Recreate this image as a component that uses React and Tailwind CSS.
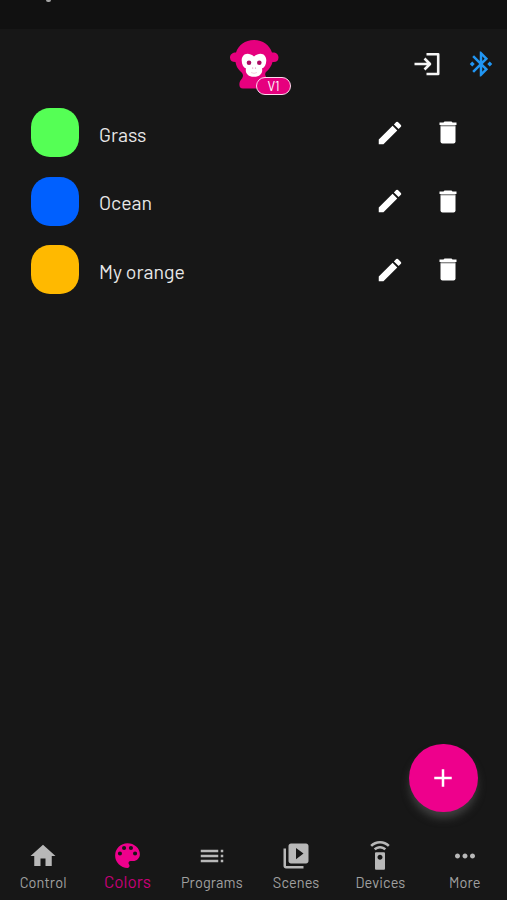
import React, { useState } from 'react';
import {
  MdAdd, MdBluetoothConnected, MdEdit, MdHome, MdMoreHoriz,
  MdSettingsRemote, MdToc, MdVideoLibrary
} from 'react-icons/md';

const PaletteIcon = ({ className }) => (
  <svg viewBox="0 0 24 24" className={className} fill="currentColor">
    <path d="M12 3a9 9 0 0 0 0 18c.83 0 1.500-.67 1.500-1.500 0-.39-.15-.74-.39-1.010-.23-.26-.38-.61-.38-.99 0-.83.67-1.500 1.500-1.500H16c2.760 0 5-2.240 5-5 0-4.420-4.030-8-9-8zM6.500 12a1.500 1.500 0 1 1 0-3 1.500 1.500 0 0 1 0 3zM9.500 8a1.500 1.500 0 1 1 0-3 1.500 1.500 0 0 1 0 3zM14.500 8a1.500 1.500 0 1 1 0-3 1.500 1.500 0 0 1 0 3zM17.500 12a1.500 1.500 0 1 1 0-3 1.500 1.500 0 0 1 0 3z" />
  </svg>
);

const TrashIcon = () => (
  <svg viewBox="0 0 18 23" className="w-[18px] h-[23px]">
    <path d="M5.500 0.500H12.500L13.500 1.500H17.500V4H0.500V1.500H4.500Z" fill="#fff" />
    <path d="M1.500 4H16.500V5.500H1.500Z" fill="#8a8a8a" />
    <path d="M1.500 5.300H16.500V20.500Q16.500 22.500 14.500 22.500H3.500Q1.500 22.500 1.500 20.500Z" fill="#fff" />
  </svg>
);

const COLORS = [
  { name: 'Grass', swatch: 'bg-[#55ff55]' },
  { name: 'Ocean', swatch: 'bg-[#0060ff]' },
  { name: 'My orange', swatch: 'bg-[#ffb900]' }
];

const TABS = [
  { name: 'Control', icon: MdHome },
  { name: 'Colors', icon: PaletteIcon },
  { name: 'Programs', icon: MdToc },
  { name: 'Scenes', icon: MdVideoLibrary },
  { name: 'Devices', icon: MdSettingsRemote },
  { name: 'More', icon: MdMoreHoriz }
];

const Logo = () => (
  <div className="relative w-[62px] h-[56px]">
    <svg viewBox="0 0 62 56" className="w-full h-full">
      <g fill="#e6007e">
        <path d="M24 0C33 0 39.500 5 42 12.500C45.500 12 48.500 14 48.500 17.500C48.500 21 46 22.500 42.500 22C41.500 26 39 29.500 36 32C34.500 34 35 36 38 39V48.500H13C10 48.500 9 46.500 9.500 43C10 40 13 38.500 13 35.500C13 33.500 11.500 32.500 10 31C7.500 28.500 6 25.500 5.500 22C2 22 0 20.500 0 17.500C0 14.500 2.500 12.500 6 12.500C8.500 5 15 0 24 0Z" />
      </g>
      <path d="M24 16.500C22 14.500 19.500 13.700 17.500 13.700C14 13.700 11.700 16.500 11.700 20.500C11.700 24.500 13.500 27.500 16 28.500C15 32.500 17.500 36.800 24 36.800C30.500 36.800 33 32.500 32 28.500C34.500 27.500 36.300 24.500 36.300 20.500C36.300 16.500 34 13.700 30.500 13.700C28.500 13.700 26 14.500 24 16.500Z" fill="#fff" />
      <circle cx="19" cy="22.700" r="2.300" fill="#ad0963" />
      <circle cx="29.300" cy="22.700" r="2.300" fill="#ad0963" />
      <circle cx="22.700" cy="28" r="0.600" fill="#d66a9e" />
      <circle cx="25.500" cy="28" r="0.600" fill="#d66a9e" />
      <path d="M21 32.500Q24 34.200 27 32.500" fill="none" stroke="#eebad3" strokeWidth="0.700" />
    </svg>
    <div className="absolute left-[26px] top-[36.500px] w-[35px] h-[18px] rounded-full border-[1.5px] border-[#ffd9ee] bg-[#e6007e] flex items-center justify-center pt-px text-[13px] leading-none text-white">
      V1
    </div>
  </div>
);

const LoginIcon = () => (
  <svg viewBox="0 0 26 24" className="w-[26px] h-6" fill="none" stroke="#f5f5f5" strokeWidth="2.600">
    <path d="M12.500 2.300H24.200V22H12.500M0.500 12H16M10.500 6.500L16 12L10.500 17.500" strokeLinejoin="round" />
  </svg>
);

const App = () => {
  const [activeTab, setActiveTab] = useState('Colors');

  return (
    <div className="relative w-full h-[900px] flex flex-col overflow-hidden bg-[#171717] font-['Barlow','Roboto',sans-serif] text-white">
      {/* Status bar */}
      <div className="h-[29px] shrink-0 bg-[#111111]">
        <div className="ml-[46px] w-[5px] h-[2px] rounded-b-full bg-[#a5a5a5]" />
      </div>

      {/* Header */}
      <header className="h-[69.5px] shrink-0 grid grid-cols-[1fr_62px_1fr] pl-[15px]">
        <div />
        <div className="pt-[11px]">
          <Logo />
        </div>
        <div className="h-[70px] flex items-center justify-end gap-[26.5px] pr-[11px]">
          <button type="button" aria-label="Log in"><LoginIcon /></button>
          <button type="button" aria-label="Bluetooth">
            <MdBluetoothConnected className="w-[30px] h-[30px] text-[#2196f3]" />
          </button>
        </div>
      </header>

      {/* Saved colors */}
      <main className="flex-1">
        {COLORS.map((color) => (
          <div key={color.name} className="h-[68.5px] flex items-center pl-[31px] pr-[50px]">
            <div className={`w-12 h-[49px] rounded-[19px] ${color.swatch}`} />
            <span className="ml-5 mt-[3px] flex-1 text-[19.5px] text-[#e8e8e8]">{color.name}</span>
            <button type="button" aria-label="Edit"><MdEdit className="w-[30px] h-[30px]" /></button>
            <button type="button" aria-label="Delete" className="ml-[34.5px]">
              <TrashIcon />
            </button>
          </div>
        ))}
      </main>

      {/* Add button */}
      <button
        type="button"
        aria-label="Add color"
        className="absolute left-[409px] top-[743.5px] w-[68.5px] h-[68.5px] rounded-full bg-[#ee008c] flex items-center justify-center shadow-[0_7px_9px_-1px_#404040]"
      >
        <MdAdd className="w-[30px] h-[30px]" />
      </button>

      {/* Bottom navigation */}
      <nav className="h-[66px] shrink-0 grid grid-cols-6 pl-px">
        {TABS.map(({ name, icon: Icon }) => (
          <button
            type="button"
            key={name}
            onClick={() => setActiveTab(name)}
            className={`flex flex-col items-center pt-[4.5px] ${activeTab === name ? 'text-[#ee008c]' : 'text-[#b8b8b8]'}`}
          >
            <span className="h-[34px] flex items-center justify-center">
              <Icon className={activeTab === name ? 'w-[33px] h-[33px]' : 'w-[30px] h-[30px]'} />
            </span>
            <span className={activeTab === name ? '-mt-[1.5px] text-[17px] leading-5 text-[#c70078]' : '-mt-px text-[14.5px] leading-5 tracking-[0.1px] text-[#a0a0a0]'}>
              {name}
            </span>
          </button>
        ))}
      </nav>
    </div>
  );
};

export default App;
